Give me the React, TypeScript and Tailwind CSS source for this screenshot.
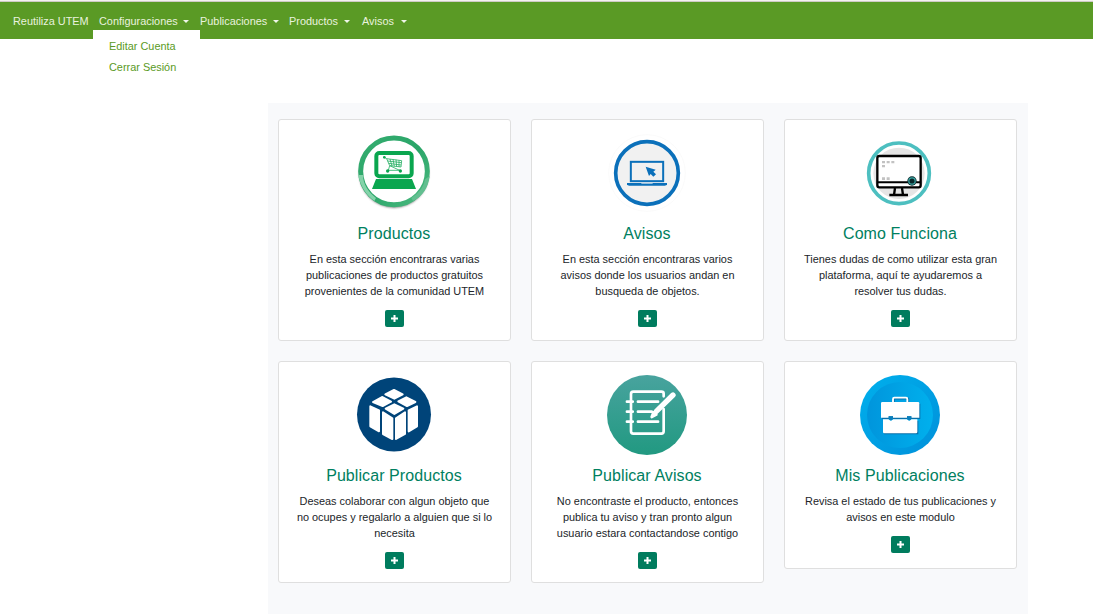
import type { ReactNode } from "react";

function Caret({ className }: { className: string }) {
  return (
    <span
      className={`${className} mt-px h-0 w-0 border-x-[3px] border-t-[3px] border-x-transparent border-t-[#f0f5e9]`}
    />
  );
}

function Drawing({ children }: { children: ReactNode }) {
  return (
    <svg className="mr-px size-20 shrink-0" viewBox="30 24 240 240" fill="none">
      {children}
    </svg>
  );
}

function ShopDrawing() {
  return (
    <Drawing>
      <defs>
        <linearGradient id="ring" x1="0" y1="0" x2="1" y2="1">
          <stop offset="0" stopColor="#35ad70" />
          <stop offset="0.5" stopColor="#2aa568" />
          <stop offset="1" stopColor="#4dbb82" />
        </linearGradient>
        <filter id="soft" x="-10%" y="-10%" width="120%" height="125%">
          <feGaussianBlur stdDeviation="3" />
        </filter>
      </defs>
      <circle cx="150" cy="144" r="104" fill="#555" opacity=".8" filter="url(#soft)" />
      <circle cx="150" cy="139" r="100" fill="#fff" stroke="url(#ring)" strokeWidth="15" />
      <path d="M43 150C48 181 65 209 91 228L96 219C72 200 57 177 57 150Z" fill="#83d3a9" />
      <path d="M257 153Q251 206 207 228L202 219Q239 195 243 163Z" fill="#62bf90" />
      <rect x="97" y="84" width="106" height="70" rx="9" fill="#fff" stroke="#0aa64f" strokeWidth="12" />
      <path d="M96 162H204L216 192H84Z" fill="#0aa64f" />
      <circle cx="121" cy="97" r="4" fill="#0aa64f" />
      <path
        d="M121 97L128 101L137 122L133 136M128 101L173 107L171 126L138 122M131 108L172 113M134 115L171 120M138 102L144 123M147 103L151 124M156 104L158 125M165 106L165 126M137 122L167 136M131 136H169"
        stroke="#21ad60"
        strokeWidth="2.4"
      />
      <circle cx="131" cy="138" r="5" fill="#0aa64f" />
      <circle cx="169" cy="138" r="5" fill="#0aa64f" />
    </Drawing>
  );
}

function LaptopDrawing() {
  return (
    <Drawing>
      <circle cx="150" cy="144" r="115" fill="#fff" stroke="#f7f7f7" strokeWidth="2" />
      <circle cx="150" cy="144" r="94" fill="#f1f1f1" stroke="#0b70ba" strokeWidth="11" />
      <rect x="101.5" y="110.5" width="97" height="58" stroke="#0b70ba" strokeWidth="6" />
      <path d="M90 174H210V178Q209 182 203 182H97Q91 182 90 178Z" fill="#0b70ba" />
      <path d="M132 175H168L166 177H134Z" fill="#c3d9e8" />
      <path d="M146 125L176 134L169 140L177 148L169 155L161 147L156 153Z" fill="#0b70ba" />
    </Drawing>
  );
}

function MonitorDrawing() {
  return (
    <Drawing>
      <circle cx="147" cy="145" r="91" fill="#fff" stroke="#4dbfc0" strokeWidth="11" />
      <circle cx="147" cy="145" r="77" fill="#e5e5e5" />
      <rect x="82" y="93" width="130" height="94" rx="6" fill="#fff" stroke="#000" strokeWidth="7" />
      <path d="M82 172H212" stroke="#000" strokeWidth="6" />
      <path d="M135 189L132 210M156 189L159 210M118 210H174" stroke="#000" strokeWidth="7" />
      <path
        d="M96 108H105V115H96ZM110 108H119V115H110ZM124 108H133V115H124ZM96 120H105V127H96ZM96 157H105V165H96ZM110 157H119V165H110Z"
        fill="#c2c2c2"
      />
      <circle cx="186" cy="168" r="14" fill="#08282a" />
      <circle cx="186" cy="168" r="9.5" stroke="#3ba8a6" strokeWidth="3.5" />
    </Drawing>
  );
}

function CubeDrawing() {
  return (
    <Drawing>
      <circle cx="150" cy="142.5" r="111" fill="#004479" />
      <g fill="#fff" stroke="#fff" strokeWidth="6" strokeLinejoin="round">
        <path d="M124 82L150 69L176 82L151 95Z" />
        <path d="M87 105L114 90L141 104L116 117Z" />
        <path d="M163 103L187 91L214 105L189 117Z" />
        <path d="M125 125L151 112L178 125L151 141Z" />
        <path d="M79 118L105 130V193L79 178Z" />
        <path d="M117 136L145 154V216L117 201Z" />
        <path d="M156 154L183 136V201L156 216Z" />
        <path d="M194 130L219 118V178L194 193Z" />
      </g>
    </Drawing>
  );
}

function NotebookDrawing() {
  return (
    <Drawing>
      <defs>
        <linearGradient id="teal" x1="0" y1="0" x2="0" y2="1">
          <stop offset="0" stopColor="#48a39e" />
          <stop offset="1" stopColor="#219981" />
        </linearGradient>
      </defs>
      <circle cx="150" cy="144" r="120" fill="url(#teal)" />
      <g stroke="#fff" strokeLinecap="round" strokeLinejoin="round">
        <path
          d="M200 88V80Q200 74 193 74H109Q102 74 102 81V193Q102 200 109 200H193Q200 200 200 193V126"
          strokeWidth="8"
        />
        <path d="M90 104H107M90 134H107M90 164H107M123 104H183M123 134H164M123 164H183" strokeWidth="8.5" />
        <path d="M178 133L228 84" strokeWidth="16" />
        <path d="M164 150L169 136L178 143Z" fill="#fff" strokeWidth="8" />
      </g>
    </Drawing>
  );
}

function BriefcaseDrawing() {
  return (
    <Drawing>
      <defs>
        <linearGradient id="outer" x1="0" y1="0" x2="1" y2="1">
          <stop offset="0" stopColor="#00b0ed" />
          <stop offset="1" stopColor="#0090da" />
        </linearGradient>
        <linearGradient id="inner" x1="0" y1="0" x2="1" y2="0">
          <stop offset="0" stopColor="#0095dc" />
          <stop offset="1" stopColor="#00b0ed" />
        </linearGradient>
      </defs>
      <circle cx="150" cy="144" r="120" fill="url(#outer)" />
      <circle cx="150" cy="144" r="99" fill="url(#inner)" />
      <g transform="translate(3 3)" fill="#0870aa">
        <path d="M93 107H208V153H93ZM99 159H202V199H99Z" />
        <path d="M129 106V92H172V106" fill="none" stroke="#0870aa" strokeWidth="5" />
      </g>
      <path d="M129 106V96Q129 92 133 92H168Q172 92 172 96V106" stroke="#fff" strokeWidth="5.5" />
      <path
        d="M97 105H204Q208 105 208 109V152H184V148H171V152H129V148H116V152H93V109Q93 105 97 105ZM99 157H116Q123 165 129 157H171Q178 165 184 157H202V195Q202 199 198 199H103Q99 199 99 195Z"
        fill="#fff"
      />
      <path d="M116 148H129V156Q123 164 116 156ZM171 148H184V156Q178 164 171 156Z" fill="#087fbd" />
    </Drawing>
  );
}

interface CardProps {
  drawing: ReactNode;
  title: string;
  lines: string[];
}

function Card({ drawing, title, lines }: CardProps) {
  return (
    <article className="flex min-h-[208px] w-[233px] flex-col items-center rounded-[3px] border border-[#dfdfdf] bg-white py-[13px] text-center">
      {drawing}
      <h2 className="mt-[11px] mr-px text-[16px] leading-[19px] tracking-[0.08px] text-[#00805f]">{title}</h2>
      <p className="mt-2 text-[10.92px] leading-4 text-[#212529]">
        {lines.map((line) => (
          <span key={line} className="block whitespace-nowrap">
            {line}
          </span>
        ))}
      </p>
      <button
        type="button"
        aria-label={title}
        className="mt-[11px] flex h-[17px] w-[19px] items-center justify-center rounded-[2px] bg-[#007c5e]"
      >
        <svg className="h-[7px] w-[7px]" viewBox="0 0 7 7">
          <path d="M3.5 0V7M0 3.5H7" stroke="#fff" strokeWidth="2" />
        </svg>
      </button>
    </article>
  );
}

const cards: CardProps[] = [
  {
    drawing: <ShopDrawing />,
    title: "Productos",
    lines: [
      "En esta sección encontraras varias",
      "publicaciones de productos gratuitos",
      "provenientes de la comunidad UTEM",
    ],
  },
  {
    drawing: <LaptopDrawing />,
    title: "Avisos",
    lines: ["En esta sección encontraras varios", "avisos donde los usuarios andan en", "busqueda de objetos."],
  },
  {
    drawing: <MonitorDrawing />,
    title: "Como Funciona",
    lines: ["Tienes dudas de como utilizar esta gran", "plataforma, aquí te ayudaremos a", "resolver tus dudas."],
  },
  {
    drawing: <CubeDrawing />,
    title: "Publicar Productos",
    lines: ["Deseas colaborar con algun objeto que", "no ocupes y regalarlo a alguien que si lo", "necesita"],
  },
  {
    drawing: <NotebookDrawing />,
    title: "Publicar Avisos",
    lines: ["No encontraste el producto, entonces", "publica tu aviso y tran pronto algun", "usuario estara contactandose contigo"],
  },
  {
    drawing: <BriefcaseDrawing />,
    title: "Mis Publicaciones",
    lines: ["Revisa el estado de tus publicaciones y", "avisos en este modulo"],
  },
];

export default function App() {
  return (
    <div className="flex h-[614px] w-[1093px] flex-col overflow-hidden bg-white font-['Liberation_Sans',Arial,sans-serif]">
      <div className="h-px shrink-0 bg-[#f4f2f0]" />
      <div className="h-px shrink-0 bg-[#cfcbc5]" />
      <nav className="flex h-[37px] shrink-0 items-center bg-[#5a9a25] pl-[13px] text-[10.9px] leading-4 text-[#e9f2df]">
        <a className="w-[86px] whitespace-nowrap">Reutiliza UTEM</a>
        <div className="relative flex w-[101px] items-center">
          Configuraciones
          <Caret className="ml-[5px]" />
          <div className="absolute top-[17px] -left-[6px] flex h-[53px] w-[107px] flex-col gap-[5px] bg-white pt-2 pl-4 text-[#5a9a25]">
            <a>Editar Cuenta</a>
            <a>Cerrar Sesión</a>
          </div>
        </div>
        <div className="flex w-[89px] items-center">
          Publicaciones
          <Caret className="ml-[6px]" />
        </div>
        <div className="flex w-[73px] items-center">
          Productos
          <Caret className="ml-[6px]" />
        </div>
        <div className="flex items-center">
          Avisos
          <Caret className="ml-[7px]" />
        </div>
      </nav>
      <main className="mt-16 ml-[268px] grid w-[760px] flex-1 grid-cols-[repeat(3,233px)] content-start items-start gap-x-5 gap-y-5 bg-[#f8f9fb] px-[10px] pt-4">
        {cards.map((card) => (
          <Card key={card.title} {...card} />
        ))}
      </main>
    </div>
  );
}
